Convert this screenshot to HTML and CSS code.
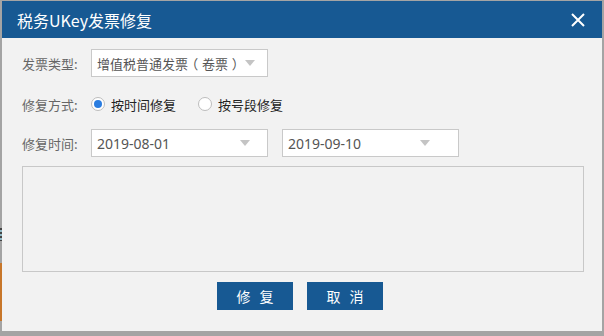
FILE: index.html
```html
<!DOCTYPE html>
<html lang="zh-CN">
<head>
    <meta charset="UTF-8">
    <meta name="viewport" content="width=device-width, initial-scale=1.0">
    <title>税务UKey发票修复</title>
    <link rel="stylesheet" href="styles.css">
</head>
<body>
    <div class="page">
        <div class="edge">
            <div class="edge-lines"></div>
            <div class="edge-orange"></div>
        </div>
        <div class="dialog">
            <div class="dialog-header">
                <span class="dialog-title">税务UKey发票修复</span>
                <svg class="close" width="14" height="14" viewBox="0 0 14 14">
                    <path d="M1 1 L13 13 M13 1 L1 13" stroke="#fff" stroke-width="2" fill="none"/>
                </svg>
            </div>
            <div class="dialog-body">
                <div class="row row-type">
                    <span class="label">发票类型:</span>
                    <div class="select sel-type">
                        <span class="select-text">增值税普通发票<span class="paren">（</span>卷票<span class="paren">）</span></span>
                        <span class="arrow"></span>
                    </div>
                </div>
                <div class="row row-mode">
                    <span class="label">修复方式:</span>
                    <label class="radio checked"><span class="dot"></span>按时间修复</label>
                    <label class="radio"><span class="dot"></span>按号段修复</label>
                </div>
                <div class="row row-date">
                    <span class="label">修复时间:</span>
                    <div class="select sel-start">
                        <span class="select-text date">2019-08-01</span>
                        <span class="arrow"></span>
                    </div>
                    <div class="select sel-end">
                        <span class="select-text date">2019-09-10</span>
                        <span class="arrow"></span>
                    </div>
                </div>
                <div class="result"></div>
                <div class="actions">
                    <button class="btn">修复</button>
                    <button class="btn">取消</button>
                </div>
            </div>
        </div>
    </div>
</body>
</html>
```

FILE: styles.css
```css
* {
    box-sizing: border-box;
}
html, body {
    margin: 0;
    padding: 0;
    height: 100vh;
    overflow: hidden;
}
body {
    background-color: #a4a4a4;
    font-family: "Noto Sans CJK SC", "Noto Sans", sans-serif;
}
.page {
    display: flex;
    padding-top: 1px;
}
.edge {
    width: 2px;
    display: flex;
    flex-direction: column;
}
.edge-lines {
    margin-top: 227px;
    height: 13px;
    background: repeating-linear-gradient(to bottom, #444 0 2px, #8fb8c4 2px 4px);
}
.edge-orange {
    margin-top: 22px;
    height: 58px;
    background-color: #c8772a;
}
.dialog {
    width: 600px;
    height: 330px;
    background-color: #f2f2f2;
    display: flex;
    flex-direction: column;
}
.dialog-header {
    height: 37px;
    background-color: #175993;
    color: #fff;
    display: flex;
    align-items: center;
    justify-content: space-between;
    padding: 0 17px 0 15px;
}
.dialog-title {
    font-size: 16px;
}
.close {
    display: block;
}
.dialog-body {
    padding: 11px 18px 0 20px;
}
.row {
    display: flex;
    align-items: center;
    height: 28px;
}
.row-mode {
    margin-top: 13px;
}
.row-date {
    margin-top: 11px;
}
.label {
    width: 69px;
    font-size: 13px;
    color: #666;
}
.select {
    width: 177px;
    height: 28px;
    background-color: #fff;
    border: 1px solid #c9c9c9;
    display: flex;
    align-items: center;
    justify-content: space-between;
    padding: 0 12px 0 5px;
    font-size: 13px;
    color: #555;
}
.paren {
    display: inline-block;
    width: 14px;
    text-align: center;
    font-feature-settings: "halt";
}
.date {
    font-family: "Noto Sans", "Open Sans", sans-serif;
    font-size: 14px;
}
.sel-start {
    padding-right: 17px;
}
.sel-end {
    margin-left: 14px;
    padding-right: 28px;
}
.arrow {
    width: 0;
    height: 0;
    border-left: 5px solid transparent;
    border-right: 5px solid transparent;
    border-top: 6px solid #c4c4c4;
}
.radio {
    display: flex;
    align-items: center;
    gap: 6px;
    font-size: 13px;
    color: #222;
    margin-right: 22px;
}
.dot {
    width: 14px;
    height: 14px;
    border-radius: 50%;
    border: 1px solid #bdbdbd;
    background-color: #fff;
    display: flex;
    align-items: center;
    justify-content: center;
}
.checked .dot::after {
    content: "";
    width: 8px;
    height: 8px;
    border-radius: 50%;
    background-color: #2b7de0;
}
.result {
    margin-top: 9px;
    height: 106px;
    border: 1px solid #c8c8c8;
}
.actions {
    display: flex;
    gap: 14px;
    margin-top: 10px;
    padding-left: 195px;
}
.btn {
    width: 76px;
    height: 28px;
    border: none;
    background-color: #175993;
    color: #fff;
    font-family: "Noto Sans CJK SC", sans-serif;
    font-size: 14px;
    letter-spacing: 9px;
    padding: 0 0 0 9px;
}
```
